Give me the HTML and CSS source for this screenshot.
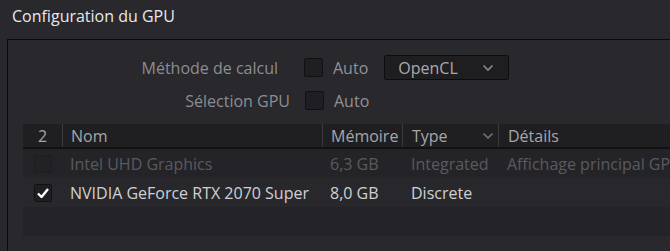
FILE: index.html
```html
<!DOCTYPE html>
<html lang="fr">
<head>
  <meta charset="UTF-8" />
  <title>Configuration du GPU</title>
  <link rel="stylesheet" href="styles.css">
</head>
<body>
  <div class="title">Configuration du GPU</div>

  <div class="panel">
    <div class="form">
      <div class="form-row">
        <span class="label">Méthode de calcul</span>
        <span class="box"></span>
        <span class="auto">Auto</span>
        <div class="dropdown">
          <span>OpenCL</span>
          <svg width="12" height="8" viewBox="0 0 12 8"><path d="M1.5 1.5 L6 6 L10.5 1.5" fill="none" stroke="#8a8a8e" stroke-width="1.6"/></svg>
        </div>
      </div>
      <div class="form-row">
        <span class="label label-gpu">Sélection GPU</span>
        <span class="box"></span>
        <span class="auto">Auto</span>
      </div>
    </div>

    <div class="table">
      <div class="row head">
        <div class="cell c-num">2</div>
        <div class="cell c-name">Nom</div>
        <div class="cell c-mem">Mémoire</div>
        <div class="cell c-type">Type
          <svg width="12" height="8" viewBox="0 0 12 8"><path d="M1.5 1.5 L6 6 L10.5 1.5" fill="none" stroke="#77777b" stroke-width="1.5"/></svg>
        </div>
        <div class="cell c-det">Détails</div>
      </div>
      <div class="row dim">
        <div class="cell c-num"><span class="box small"></span></div>
        <div class="cell c-name">Intel UHD Graphics</div>
        <div class="cell c-mem">6,3 GB</div>
        <div class="cell c-type">Integrated</div>
        <div class="cell c-det">Affichage principal GPU</div>
      </div>
      <div class="row on">
        <div class="cell c-num">
          <span class="box small checked">
            <svg width="14" height="12" viewBox="0 0 14 12"><path d="M2 6.5 L5.5 10 L12 2" fill="none" stroke="#fff" stroke-width="2.4" stroke-linejoin="round"/></svg>
          </span>
        </div>
        <div class="cell c-name">NVIDIA GeForce RTX 2070 Super</div>
        <div class="cell c-mem">8,0 GB</div>
        <div class="cell c-type">Discrete</div>
        <div class="cell c-det"></div>
      </div>
      <div class="row empty"></div>
    </div>
  </div>
</body>
</html>
```

FILE: styles.css
```css
* {
  box-sizing: border-box;
}

body {
  margin: 0;
  background: #28282d;
  font-family: 'Open Sans', sans-serif;
  font-size: 16px;
  overflow: hidden;
}

.title {
  height: 39px;
  padding: 5px 0 0 12px;
  font-size: 16px;
  color: #e8e8ea;
}

.panel {
  margin-left: 7px;
  border-top: 1px solid #0b0b0d;
  border-left: 1px solid #0b0b0d;
  height: 220px;
  padding: 15px 0 0 15px;
}

.form {
  display: flex;
  flex-direction: column;
  gap: 8px;
}

.form-row {
  display: flex;
  align-items: center;
  height: 25px;
}

.label {
  width: 281px;
  text-align: right;
  color: #8d8d92;
  padding-right: 26px;
}

.label-gpu {
  width: 282px;
  padding-right: 15px;
}

.box {
  width: 19px;
  height: 19px;
  background: #1f1f23;
  border: 1px solid #111113;
  border-radius: 2px;
  display: inline-flex;
  align-items: center;
  justify-content: center;
}

.auto {
  color: #929296;
  margin-left: 10px;
}

.dropdown {
  margin-left: 16px;
  width: 125px;
  height: 25px;
  background: #1e1e21;
  border: 1px solid #0d0d0f;
  border-radius: 2px;
  display: flex;
  align-items: center;
  justify-content: space-between;
  padding: 0 14px 0 13px;
  color: #aaaaad;
}

.table {
  margin-top: 11px;
}

.row {
  display: flex;
  height: 29px;
  align-items: center;
}

.row.head {
  height: 25px;
  background: #1f1f22;
  border-bottom: 2px solid #121214;
  color: #a6a6aa;
}

.row.dim {
  background: #242428;
  color: #5a5a5e;
}

.row.on {
  background: #28282c;
  color: #d0d0d3;
}

.row.empty {
  background: #242428;
}

.cell {
  white-space: nowrap;
  overflow: hidden;
  padding-left: 8px;
  height: 100%;
  display: flex;
  align-items: center;
}

.head .cell + .cell {
  border-left: 1px solid #3a3a3f;
}

.c-num {
  width: 39px;
  justify-content: center;
  padding-left: 0;
}

.c-name {
  width: 260px;
}

.c-mem {
  width: 80px;
}

.c-type {
  width: 96px;
  padding-left: 9px;
  justify-content: space-between;
  padding-right: 4px;
}

.c-det {
  flex: 1;
  padding-left: 9px;
}

.box.small {
  width: 18px;
  height: 18px;
}

.row.dim .box.small {
  background: #222226;
  border-color: #1d1d20;
}
```
